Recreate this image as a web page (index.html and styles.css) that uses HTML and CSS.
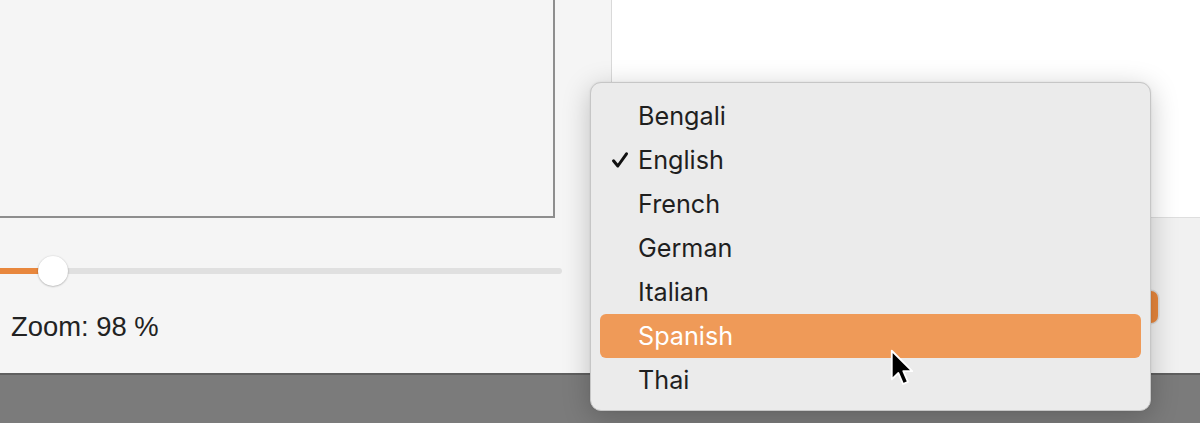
FILE: index.html
```html
<!DOCTYPE html>
<html>
<head>
<meta charset="utf-8">
<link rel="stylesheet" href="styles.css">
</head>
<body>
<div class="app">
  <div class="main">
    <div class="left">
      <div class="canvas"></div>
      <div class="slider">
        <div class="slider-fill" style="width:45px"></div>
        <div class="slider-thumb"></div>
      </div>
      <div class="zoom-label">Zoom: 98 %</div>
    </div>
    <div class="right">
      <div class="preview"></div>
      <div class="controls">
        <div class="apply-btn"></div>
      </div>
    </div>
  </div>
  <div class="statusbar"></div>

  <div class="menu">
    <div class="menu-item">Bengali</div>
    <div class="menu-item checked">
      <svg class="check" viewBox="0 0 18 18" width="18" height="18"><path d="M2.5 9.8 L6.8 15 L15.5 2.8" fill="none" stroke="#111" stroke-width="3" stroke-linecap="round" stroke-linejoin="round"/></svg>
      English
    </div>
    <div class="menu-item">French</div>
    <div class="menu-item">German</div>
    <div class="menu-item">Italian</div>
    <div class="menu-item active">Spanish</div>
    <div class="menu-item">Thai</div>
  </div>

  <svg class="cursor" viewBox="0 0 24 36" width="28" height="42">
    <path d="M1.5 1.5 L1.5 26 L7.2 20.6 L11.2 30 L15.4 28.2 L11.4 19 L19 19 Z" fill="#000" stroke="#fff" stroke-width="1.6" stroke-linejoin="round"/>
  </svg>
</div>
</body>
</html>
```

FILE: styles.css
```css
* { box-sizing: border-box; }
html, body { margin: 0; padding: 0; }
body {
  width: 1200px;
  height: 423px;
  overflow: hidden;
  font-family: "Liberation Sans", Arial, sans-serif;
  background: #7b7b7b;
}
.app {
  position: relative;
  width: 1200px;
  height: 423px;
  display: flex;
  flex-direction: column;
}
.main {
  display: flex;
  height: 373px;
}
.left {
  width: 612px;
  background: #f5f5f5;
  border-right: 1px solid #d9d9d9;
  display: flex;
  flex-direction: column;
}
.canvas {
  width: 555px;
  height: 218px;
  border-right: 2px solid #8e8e8e;
  border-bottom: 2px solid #8e8e8e;
  background: #f5f5f5;
}
.slider {
  position: relative;
  margin-top: 50px;
  width: 562px;
  height: 6px;
  border-radius: 3px;
  background: #e0e0e0;
}
.slider-fill {
  height: 6px;
  background: #e8873d;
}
.slider-thumb {
  position: absolute;
  left: 38px;
  top: -12px;
  width: 30px;
  height: 30px;
  border-radius: 50%;
  background: #fff;
  box-shadow: 0 0.5px 2px rgba(0,0,0,0.35);
}
.zoom-label {
  margin-top: 37px;
  padding-left: 11px;
  font-size: 27.4px;
  line-height: 32px;
  color: #222;
}
.right {
  flex: 1;
  display: flex;
  flex-direction: column;
}
.preview {
  height: 218px;
  background: #fff;
  border-bottom: 1px solid #dedede;
}
.controls {
  flex: 1;
  background: #f1f1f1;
  display: flex;
  justify-content: flex-end;
  align-items: flex-start;
  padding: 73px 42px 0 0;
}
.apply-btn {
  width: 140px;
  height: 32px;
  border-radius: 7px;
  background: #e8873d;
  box-shadow: 0 0 0 1.5px #dcdcdc;
}
.statusbar {
  flex: 1;
  background: #7b7b7b;
  border-top: 2px solid #5f5f5f;
}
.menu {
  position: absolute;
  left: 590px;
  top: 82px;
  width: 561px;
  height: 329px;
  padding: 11px 9px 9px 9px;
  background: #ebebeb;
  border: 1px solid #c6c6c6;
  border-radius: 11px;
  box-shadow: 0 6px 28px rgba(0,0,0,0.22), 0 0 2px rgba(0,0,0,0.1);
  font-family: "Inter", "Noto Sans", sans-serif;
}
.menu-item {
  position: relative;
  height: 44px;
  line-height: 44px;
  padding-left: 38px;
  font-size: 25.2px;
  color: #1f1f1f;
  border-radius: 6px;
}
.menu-item.active {
  background: #ef9a58;
  color: #fff;
}
.check {
  position: absolute;
  left: 11px;
  top: 13px;
}
.cursor {
  position: absolute;
  left: 890px;
  top: 349px;
}
```
